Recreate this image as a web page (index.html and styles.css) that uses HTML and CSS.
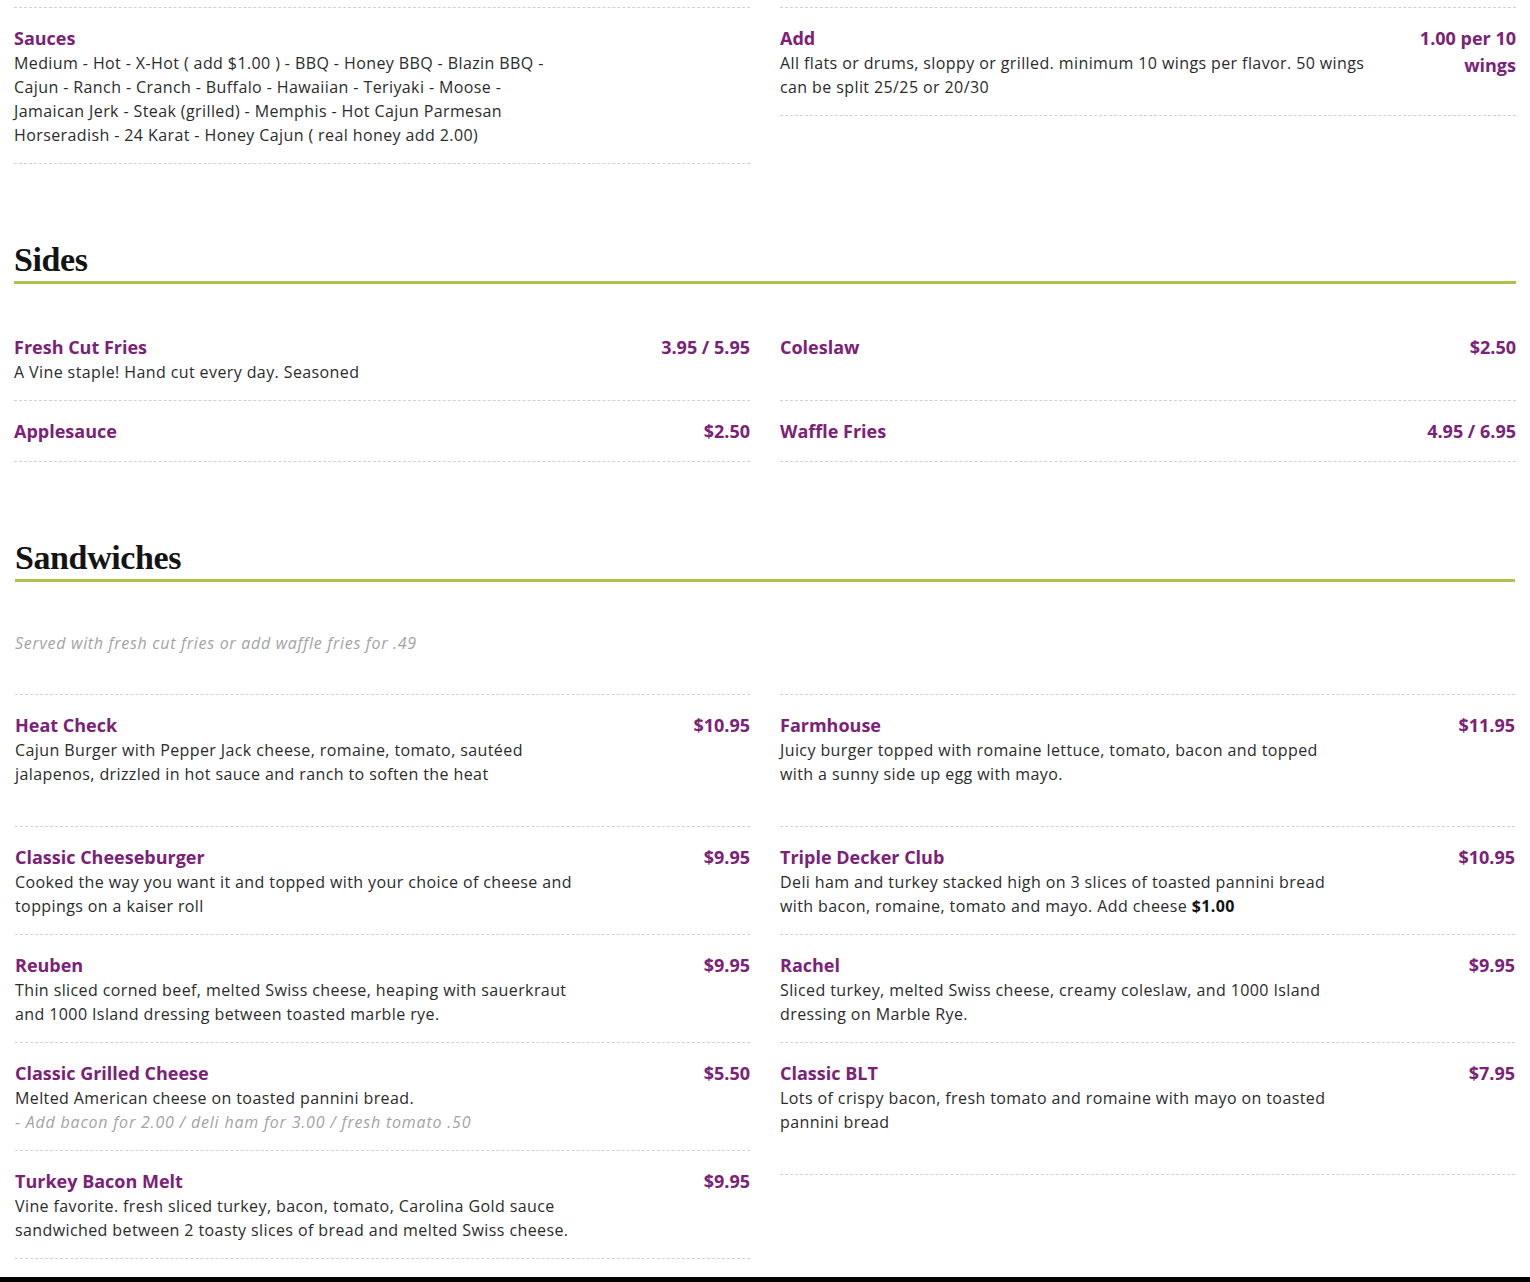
FILE: index.html
```html
<!DOCTYPE html>
<html lang="en">
<head>
<meta charset="utf-8">
<title>Menu</title>
<link rel="stylesheet" href="styles.css">
</head>
<body>
<div class="menu">
  <section class="section first">
    <div class="cols bordered">
      <div class="col">
        <div class="item">
          <div class="info">
            <h3 class="name">Sauces</h3>
            <p class="desc">Medium - Hot - X-Hot ( add $1.00 ) - BBQ - Honey BBQ - Blazin BBQ -<br>Cajun - Ranch - Cranch - Buffalo - Hawaiian - Teriyaki - Moose -<br>Jamaican Jerk - Steak (grilled) - Memphis - Hot Cajun Parmesan<br>Horseradish - 24 Karat - Honey Cajun ( real honey add 2.00)</p>
          </div>
          <div class="price"></div>
        </div>
      </div>
      <div class="col">
        <div class="item">
          <div class="info">
            <h3 class="name">Add</h3>
            <p class="desc">All flats or drums, sloppy or grilled. minimum 10 wings per flavor. 50 wings can be split 25/25 or 20/30</p>
          </div>
          <div class="price">1.00 per 10 wings</div>
        </div>
      </div>
    </div>
  </section>

  <section class="section">
    <h2 class="heading">Sides</h2>
    <div class="cols sides">
      <div class="col">
        <div class="item">
          <div class="info">
            <h3 class="name">Fresh Cut Fries</h3>
            <p class="desc">A Vine staple! Hand cut every day. Seasoned</p>
          </div>
          <div class="price">3.95 / 5.95</div>
        </div>
        <div class="item">
          <div class="info">
            <h3 class="name">Applesauce</h3>
          </div>
          <div class="price">$2.50</div>
        </div>
      </div>
      <div class="col">
        <div class="item">
          <div class="info">
            <h3 class="name">Coleslaw</h3>
            <p class="desc">&nbsp;</p>
          </div>
          <div class="price">$2.50</div>
        </div>
        <div class="item">
          <div class="info">
            <h3 class="name">Waffle Fries</h3>
          </div>
          <div class="price">4.95 / 6.95</div>
        </div>
      </div>
    </div>
  </section>

  <section class="section inset">
    <h2 class="heading">Sandwiches</h2>
    <p class="note">Served with fresh cut fries or add waffle fries for .49</p>
    <div class="cols bordered">
      <div class="col">
        <div class="item">
          <div class="info">
            <h3 class="name">Heat Check</h3>
            <p class="desc">Cajun Burger with Pepper Jack cheese, romaine, tomato, sautéed jalapenos, drizzled in hot sauce and ranch to soften the heat</p>
            <p class="desc">&nbsp;</p>
          </div>
          <div class="price">$10.95</div>
        </div>
        <div class="item">
          <div class="info">
            <h3 class="name">Classic Cheeseburger</h3>
            <p class="desc">Cooked the way you want it and topped with your choice of cheese and toppings on a kaiser roll</p>
          </div>
          <div class="price">$9.95</div>
        </div>
        <div class="item">
          <div class="info">
            <h3 class="name">Reuben</h3>
            <p class="desc">Thin sliced corned beef, melted Swiss cheese, heaping with sauerkraut<br>and 1000 Island dressing between toasted marble rye.</p>
          </div>
          <div class="price">$9.95</div>
        </div>
        <div class="item">
          <div class="info">
            <h3 class="name">Classic Grilled Cheese</h3>
            <p class="desc">Melted American cheese on toasted pannini bread.</p>
            <p class="desc extra">- Add bacon for 2.00 / deli ham for 3.00 / fresh tomato .50</p>
          </div>
          <div class="price">$5.50</div>
        </div>
        <div class="item">
          <div class="info">
            <h3 class="name">Turkey Bacon Melt</h3>
            <p class="desc">Vine favorite. fresh sliced turkey, bacon, tomato, Carolina Gold sauce sandwiched between 2 toasty slices of bread and melted Swiss cheese.</p>
          </div>
          <div class="price">$9.95</div>
        </div>
      </div>
      <div class="col">
        <div class="item">
          <div class="info">
            <h3 class="name">Farmhouse</h3>
            <p class="desc">Juicy burger topped with romaine lettuce, tomato, bacon and topped<br>with a sunny side up egg with mayo.</p>
            <p class="desc">&nbsp;</p>
          </div>
          <div class="price">$11.95</div>
        </div>
        <div class="item">
          <div class="info">
            <h3 class="name">Triple Decker Club</h3>
            <p class="desc">Deli ham and turkey stacked high on 3 slices of toasted pannini bread<br>with bacon, romaine, tomato and mayo. Add cheese <strong>$1.00</strong></p>
          </div>
          <div class="price">$10.95</div>
        </div>
        <div class="item">
          <div class="info">
            <h3 class="name">Rachel</h3>
            <p class="desc">Sliced turkey, melted Swiss cheese, creamy coleslaw, and 1000 Island dressing on Marble Rye.</p>
          </div>
          <div class="price">$9.95</div>
        </div>
        <div class="item">
          <div class="info">
            <h3 class="name">Classic BLT</h3>
            <p class="desc">Lots of crispy bacon, fresh tomato and romaine with mayo on toasted pannini bread</p>
            <p class="desc">&nbsp;</p>
          </div>
          <div class="price">$7.95</div>
        </div>
      </div>
    </div>
  </section>
</div>
<div class="footer"></div>
</body>
</html>
```

FILE: styles.css
```css
* { box-sizing: border-box; }

html, body {
  margin: 0;
  padding: 0;
  background: #ffffff;
}

body {
  font-family: "Open Sans", "Liberation Sans", sans-serif;
  color: #2b2b2b;
  font-size: 16px;
  line-height: 24px;
}

.menu {
  padding: 7px 14px 0;
}

.section.inset {
  padding: 0 1px;
}

.heading {
  margin: 76px 0 0;
  font-family: "Liberation Serif", "DejaVu Serif", serif;
  font-weight: 700;
  font-size: 34px;
  line-height: 40px;
  letter-spacing: -0.4px;
  color: #141414;
  padding-bottom: 1px;
  border-bottom: 3px solid #adc24b;
}

.note {
  margin: 49px 0 39px;
  font-style: italic;
  color: #a3a3a3;
  letter-spacing: 0.7px;
}

.cols {
  display: flex;
  gap: 30px;
  align-items: flex-start;
}

.cols.sides {
  margin-top: 33px;
}

.col {
  flex: 1 1 0;
  min-width: 0;
}

.cols.bordered .col {
  border-top: 1px dashed #d2d2d2;
}

.item {
  display: flex;
  justify-content: space-between;
  align-items: flex-start;
  padding: 17px 0 16px;
  border-bottom: 1px dashed #d2d2d2;
}

.info {
  width: 80%;
}

.name {
  margin: 0;
  font-size: 18px;
  line-height: 26px;
  font-weight: 700;
  color: #7b2177;
}

.desc {
  margin: 0;
  letter-spacing: 0.4px;
  color: #2b2b2b;
}

.desc strong {
  font-weight: 700;
  color: #111;
}

.desc.extra {
  font-style: italic;
  color: #a3a3a3;
  letter-spacing: 0.8px;
}

.price {
  width: 20%;
  text-align: right;
  font-size: 18px;
  line-height: 27px;
  font-weight: 700;
  color: #7b2177;
}

.footer {
  margin-top: 18px;
  height: 60px;
  background: #000;
}
```
